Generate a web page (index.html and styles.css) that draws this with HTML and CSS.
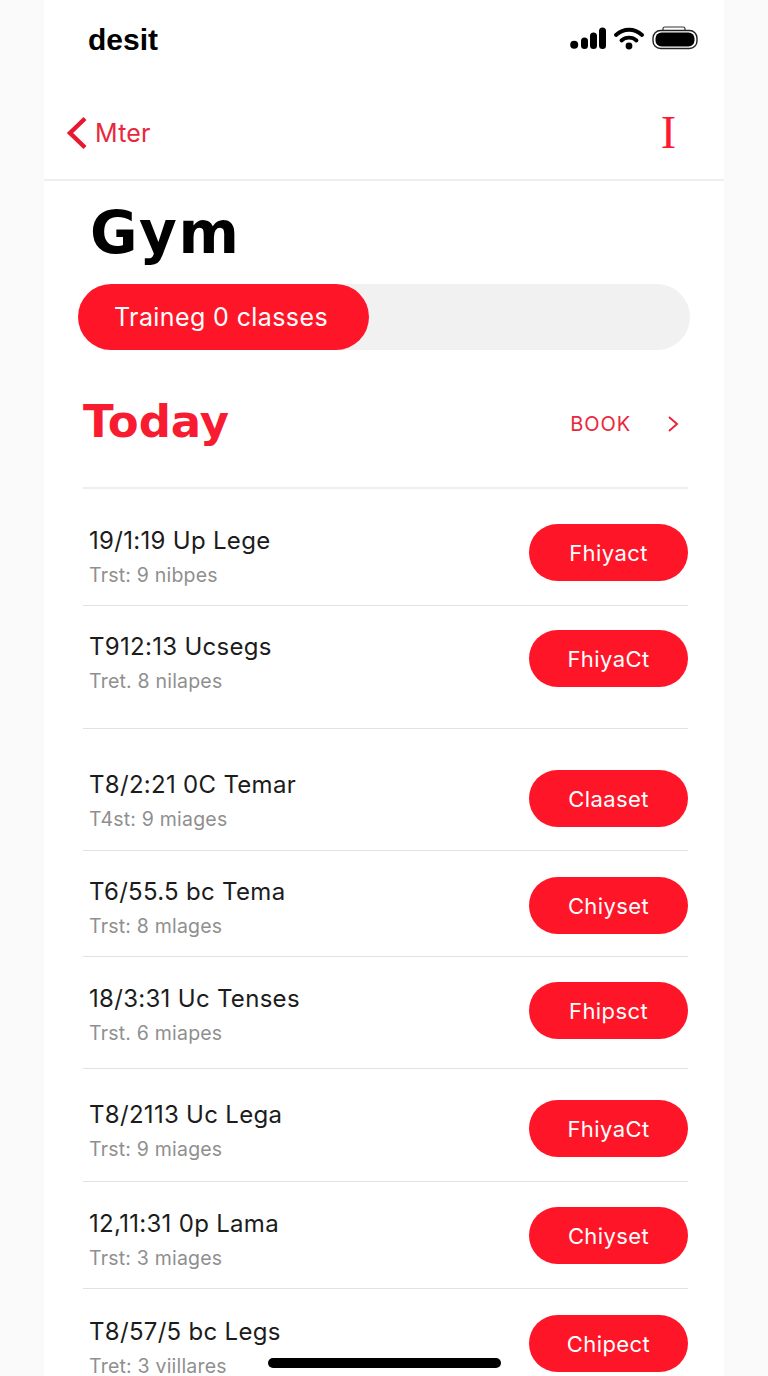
FILE: index.html
```html
<!DOCTYPE html>
<html lang="en">
<head>
    <meta charset="UTF-8">
    <meta name="viewport" content="width=device-width, initial-scale=1.0">
    <title>Gym</title>
    <link rel="stylesheet" href="styles.css">
</head>
<body>
    <div class="screen">
        <div class="status-bar">
            <span class="status-label">desit</span>
            <div class="status-icons">
                <svg class="icon-signal" width="36" height="23" viewBox="0 0 36 23">
                    <circle cx="4.2" cy="17.8" r="4" fill="#000"/>
                    <rect x="11" y="10.5" width="7" height="11.5" rx="3.5" fill="#000"/>
                    <rect x="20" y="5.5" width="7" height="16.5" rx="3.5" fill="#000"/>
                    <rect x="29" y="0.5" width="7" height="21.5" rx="3.5" fill="#000"/>
                </svg>
                <svg class="icon-wifi" width="30" height="23" viewBox="0 0 30 23">
                    <path d="M2 8C9.5 1 20.5 1 28 8" fill="none" stroke="#000" stroke-width="3.8" stroke-linecap="round"/>
                    <path d="M7.5 13.5C11.5 9.7 18.5 9.7 22.5 13.5" fill="none" stroke="#000" stroke-width="3.8" stroke-linecap="round"/>
                    <circle cx="15" cy="19" r="3.4" fill="#000"/>
                </svg>
                <svg class="icon-battery" width="46" height="24" viewBox="0 0 46 24">
                    <path d="M11 5V2.5C11 1.5 12 1 13 1H31C32 1 33 1.5 33 2.5V5" fill="none" stroke="#333" stroke-width="1.2"/>
                    <rect x="1" y="4.5" width="44" height="18" rx="7.5" fill="#fff" stroke="#222" stroke-width="1.4"/>
                    <rect x="3.5" y="6.5" width="39" height="14" rx="6" fill="#000"/>
                </svg>
            </div>
        </div>

        <div class="nav-bar">
            <a class="nav-back" href="#">
                <svg width="22" height="34" viewBox="0 0 22 34">
                    <path d="M19 2.5L4 17L19 31.5" fill="none" stroke="#e8192f" stroke-width="4.4"/>
                </svg>
                <span>Mter</span>
            </a>
            <span class="nav-action">I</span>
        </div>

        <main class="content">
            <h1 class="page-title">Gym</h1>

            <div class="progress">
                <div class="progress-fill">Traineg 0 classes</div>
            </div>

            <div class="section-head">
                <h2 class="section-title">Today</h2>
                <a class="section-link" href="#">
                    <span>BOOK</span>
                    <svg width="12" height="18" viewBox="0 0 12 18">
                        <path d="M2 2L10 9L2 16" fill="none" stroke="#e8283c" stroke-width="2"/>
                    </svg>
                </a>
            </div>

            <ul class="class-list">
                <li class="class-row">
                    <div class="class-info">
                        <div class="class-name">19/1:19 Up Lege</div>
                        <div class="class-meta">Trst: 9 nibpes</div>
                    </div>
                    <button class="class-btn" type="button">Fhiyact</button>
                </li>
                <li class="class-row">
                    <div class="class-info">
                        <div class="class-name">T912:13 Ucsegs</div>
                        <div class="class-meta">Tret. 8 nilapes</div>
                    </div>
                    <button class="class-btn" type="button">FhiyaCt</button>
                </li>
                <li class="class-row">
                    <div class="class-info">
                        <div class="class-name">T8/2:21 0C Temar</div>
                        <div class="class-meta">T4st: 9 miages</div>
                    </div>
                    <button class="class-btn" type="button">Claaset</button>
                </li>
                <li class="class-row">
                    <div class="class-info">
                        <div class="class-name">T6/55.5 bc Tema</div>
                        <div class="class-meta">Trst: 8 mlages</div>
                    </div>
                    <button class="class-btn" type="button">Chiyset</button>
                </li>
                <li class="class-row">
                    <div class="class-info">
                        <div class="class-name">18/3:31 Uc Tenses</div>
                        <div class="class-meta">Trst. 6 miapes</div>
                    </div>
                    <button class="class-btn" type="button">Fhipsct</button>
                </li>
                <li class="class-row">
                    <div class="class-info">
                        <div class="class-name">T8/2113 Uc Lega</div>
                        <div class="class-meta">Trst: 9 miages</div>
                    </div>
                    <button class="class-btn" type="button">FhiyaCt</button>
                </li>
                <li class="class-row">
                    <div class="class-info">
                        <div class="class-name">12,11:31 0p Lama</div>
                        <div class="class-meta">Trst: 3 miages</div>
                    </div>
                    <button class="class-btn" type="button">Chiyset</button>
                </li>
                <li class="class-row">
                    <div class="class-info">
                        <div class="class-name">T8/57/5 bc Legs</div>
                        <div class="class-meta">Tret: 3 viillares</div>
                    </div>
                    <button class="class-btn" type="button">Chipect</button>
                </li>
            </ul>
        </main>

        <div class="home-indicator"></div>
    </div>
</body>
</html>
```

FILE: styles.css
```css
* {
    box-sizing: border-box;
}
html, body {
    height: 100%;
}
body {
    margin: 0;
    background-color: #fafafa;
    font-family: Inter, "Liberation Sans", sans-serif;
    color: #1a1a1a;
    overflow: hidden;
}
.screen {
    position: relative;
    width: 680px;
    height: 1376px;
    margin-left: 44px;
    background-color: #fff;
    overflow: hidden;
}

/* status bar */
.status-bar {
    display: flex;
    justify-content: space-between;
    align-items: center;
    height: 80px;
    padding: 0 26px 0 44px;
}
.status-label {
    font-family: "Liberation Sans", sans-serif;
    font-size: 30px;
    font-weight: bold;
    color: #000;
}
.status-icons {
    display: flex;
    align-items: center;
    gap: 8px;
    margin-bottom: 4px;
}

/* nav bar */
.nav-bar {
    display: flex;
    justify-content: space-between;
    align-items: center;
    height: 101px;
    padding: 6px 48px 0 22px;
    border-bottom: 2px solid #eeeeee;
}
.nav-back {
    display: flex;
    align-items: center;
    gap: 7px;
    color: #e8283c;
    font-size: 25px;
    letter-spacing: 0.2px;
    text-decoration: none;
}
.nav-action {
    font-family: "Liberation Serif", serif;
    font-size: 46px;
    color: #fb1a30;
}

/* main */
.content {
    padding: 0 34px;
}
.page-title {
    margin: 19px 0 0 12px;
    font-family: "DejaVu Sans", sans-serif;
    font-size: 58px;
    font-weight: bold;
    line-height: 66px;
    letter-spacing: 1.5px;
    color: #000;
}
.progress {
    margin-top: 18px;
    width: 612px;
    height: 66px;
    background-color: #f1f1f2;
    border-radius: 33px;
}
.progress-fill {
    display: flex;
    align-items: center;
    justify-content: center;
    width: 291px;
    height: 66px;
    padding-right: 5px;
    background-color: #ff1528;
    border-radius: 33px;
    color: #fff;
    font-size: 25px;
    letter-spacing: 0.4px;
}
.section-head {
    display: flex;
    justify-content: space-between;
    align-items: center;
    height: 139px;
    margin: 0 2px 0 5px;
    padding: 6px 9px 0 0;
    border-bottom: 2px solid #eeeeee;
}
.section-title {
    margin: 0;
    font-family: "DejaVu Sans", sans-serif;
    font-size: 45px;
    font-weight: bold;
    color: #f81c31;
}
.section-link {
    display: flex;
    align-items: center;
    gap: 36px;
    margin-top: 4px;
    color: #e8283c;
    font-size: 20px;
    letter-spacing: 0.9px;
    text-decoration: none;
}

/* class list */
.class-list {
    list-style: none;
    margin: 0 2px 0 5px;
    padding: 0;
}
.class-row {
    display: flex;
    justify-content: space-between;
    align-items: flex-start;
    border-bottom: 1px solid #e2e2e2;
}
.class-row:nth-child(1) { height: 117px; padding-top: 35px; }
.class-row:nth-child(2) { height: 123px; padding-top: 24px; }
.class-row:nth-child(3) { height: 122px; padding-top: 41px; }
.class-row:nth-child(4) { height: 106px; padding-top: 26px; }
.class-row:nth-child(5) { height: 112px; padding-top: 25px; }
.class-row:nth-child(6) { height: 113px; padding-top: 31px; }
.class-row:nth-child(7) { height: 107px; padding-top: 25px; }
.class-row:nth-child(8) { height: 100px; padding-top: 26px; border-bottom: none; }
.class-info {
    margin: 3px 0 0 6px;
}
.class-row:nth-child(3) .class-info,
.class-row:nth-child(4) .class-info,
.class-row:nth-child(6) .class-info {
    margin-top: 1px;
}
.class-name {
    font-size: 24px;
    line-height: 28px;
    letter-spacing: 0.3px;
    color: #1c1c1c;
}
.class-meta {
    margin-top: 10px;
    font-size: 19.5px;
    line-height: 20px;
    letter-spacing: 0.2px;
    color: #8f8f8f;
}
.class-btn {
    width: 159px;
    height: 57px;
    padding: 0;
    border: none;
    border-radius: 29px;
    background-color: #ff1528;
    color: #fff;
    font-family: inherit;
    font-size: 22px;
    letter-spacing: 0.4px;
    cursor: pointer;
}

.home-indicator {
    position: absolute;
    left: 224px;
    top: 1358px;
    width: 233px;
    height: 10px;
    background-color: #000;
    border-radius: 5px;
}
```
